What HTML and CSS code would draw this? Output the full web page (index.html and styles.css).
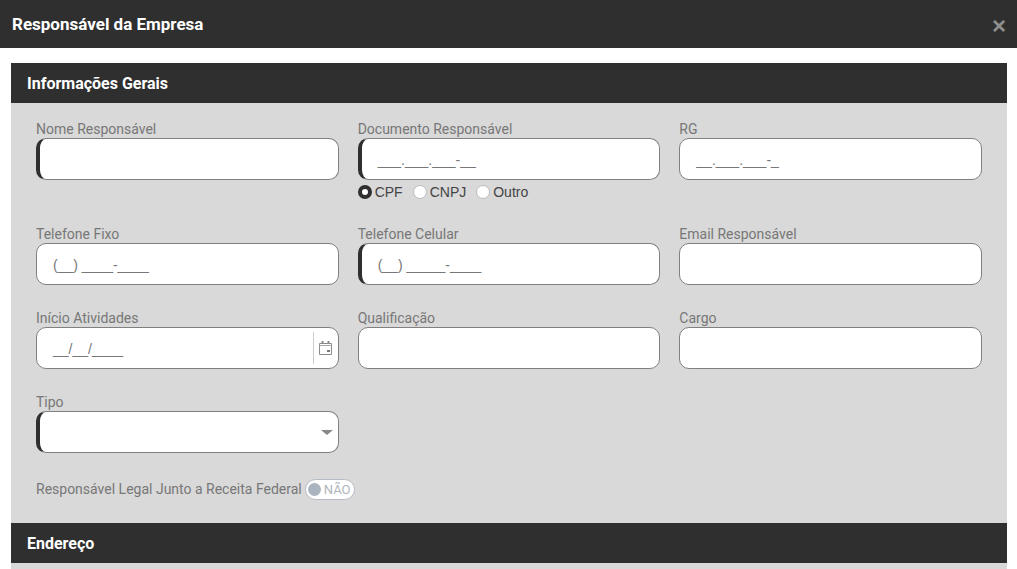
FILE: index.html
```html
<!DOCTYPE html>
<html lang="pt">
<head>
<meta charset="utf-8">
<title>Responsável da Empresa</title>
<link rel="stylesheet" href="styles.css">
</head>
<body>
<header class="modal-head">
  <h1 class="modal-title">Responsável da Empresa</h1>
  <span class="modal-close">×</span>
</header>
<main class="modal-body">
  <h2 class="section-head">Informações Gerais</h2>
  <section class="panel">
    <div class="grid">
      <div class="field"><label class="label">Nome Responsável</label><div class="input req"></div></div>
      <div class="field">
        <label class="label">Documento Responsável</label>
        <div class="input req mask mask-doc">___.___.___-__</div>
        <div class="radios">
          <span class="radio on"></span><span class="radio-text">CPF</span>
          <span class="radio"></span><span class="radio-text">CNPJ</span>
          <span class="radio"></span><span class="radio-text">Outro</span>
        </div>
      </div>
      <div class="field"><label class="label">RG</label><div class="input mask mask-rg">__.___.___-_</div></div>

      <div class="field"><label class="label">Telefone Fixo</label><div class="input mask mask-tel">(__) ____-____</div></div>
      <div class="field"><label class="label">Telefone Celular</label><div class="input req mask mask-doc">(__) _____-____</div></div>
      <div class="field"><label class="label">Email Responsável</label><div class="input"></div></div>

      <div class="field">
        <label class="label">Início Atividades</label>
        <div class="input mask mask-tel date">__/__/____
          <span class="date-btn">
            <svg width="15" height="16" viewBox="0 0 15 16" fill="none" stroke="#8a8a8a">
              <path d="M1.5 3.5h12v11h-12z"/>
              <path d="M1 5.5h13" stroke="#a5a5a5"/>
              <path d="M4.5 1v2.5M10.5 1v2.5" stroke-width="2"/>
              <rect x="9" y="10" width="3" height="2" fill="#777" stroke="none"/>
            </svg>
          </span>
        </div>
      </div>
      <div class="field"><label class="label">Qualificação</label><div class="input"></div></div>
      <div class="field"><label class="label">Cargo</label><div class="input"></div></div>

      <div class="field"><label class="label">Tipo</label><div class="input req select"><span class="caret"></span></div></div>
    </div>
    <div class="legal">
      <span class="legal-text">Responsável Legal Junto a Receita Federal</span>
      <span class="toggle"><span class="knob"></span><span class="toggle-text">NÃO</span></span>
    </div>
  </section>
  <h2 class="section-head">Endereço</h2>
  <section class="panel-rest"></section>
</main>
</body>
</html>
```
FILE: styles.css
```css
* { box-sizing: border-box; }
html, body { margin: 0; height: 569px; overflow: hidden; }
body { background: #fff; font-family: Roboto, "Liberation Sans", sans-serif; font-size: 14px; color: #777; }

.modal-head { height: 48px; background: #2f2f2f; display: flex; align-items: center; justify-content: space-between; padding: 0 12px; }
.modal-title { margin: 0 0 1px; font-size: 17px; font-weight: 700; color: #fff; }
.modal-close { color: #8f8f8f; font-size: 24px; font-weight: 700; line-height: 24px; margin: 4px -1px 0 0; font-family: "Liberation Sans", sans-serif; }

.modal-body { padding: 15px 10px 0 11px; }
.section-head { margin: 0; height: 40px; line-height: 42px; padding-left: 16px; background: #2f2f2f; color: #fff; font-size: 16px; font-weight: 700; }
.panel { height: 420px; background: #d9d9d9; padding: 17px 25px 0; }
.panel-rest { height: 20px; background: #d9d9d9; }

.grid { display: grid; grid-template-columns: repeat(3, 1fr); column-gap: 19px; row-gap: 24px; }
.label { display: block; height: 18px; line-height: 18px; font-size: 14px; color: #777; }
.input { position: relative; height: 42px; background: #fff; border: 1px solid #808080; border-radius: 10px; }
.input.req { border-left: 4px solid #2f2f2f; }
.mask { color: #777; font-family: "Liberation Sans", sans-serif; font-size: 14px; line-height: 40px; padding-top: 1px; }
.mask-doc { padding-left: 16px; }
.mask-rg { padding-left: 16px; }
.mask-tel { padding-left: 16px; }

.radios { display: flex; align-items: center; height: 21px; padding-top: 3px; color: #444; font-family: "Liberation Sans", sans-serif; font-size: 14px; }
.radio { width: 14px; height: 14px; border-radius: 50%; background: #fff; border: 1px solid #bbb; margin-right: 3px; }
.radio.on { border: 4px solid #2f2f2f; }
.radio-text { margin-right: 10px; }

.date-btn { position: absolute; top: 4px; right: 0; bottom: 4px; width: 25px; border-left: 1px solid #ccc; display: flex; align-items: center; justify-content: center; }
.caret { position: absolute; right: 5px; top: 18px; border: 6px solid transparent; border-top: 5px solid #888; border-bottom: 0; }

.legal { display: flex; align-items: center; margin-top: 25px; height: 22px; }
.legal-text { color: #777; }
.toggle { display: flex; align-items: center; width: 50px; height: 21px; margin-left: 3px; background: #fff; border: 1px solid #b5bcc4; border-radius: 11px; padding-left: 2px; }
.knob { width: 13px; height: 13px; border-radius: 50%; background: #aab4be; }
.toggle-text { margin-left: 3px; font-size: 13px; color: #b0b6bc; }
```
